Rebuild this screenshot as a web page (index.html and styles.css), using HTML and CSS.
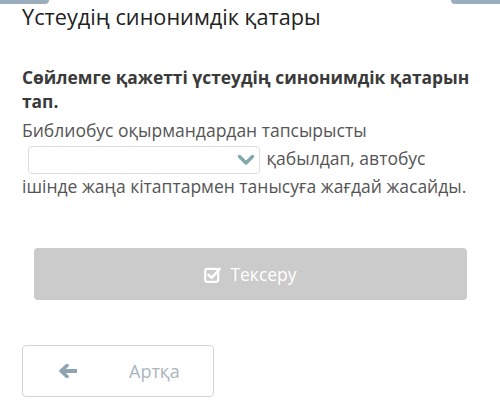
FILE: index.html
```html
<!DOCTYPE html>
<html lang="kk">

<head>
    <meta charset="UTF-8">
    <meta name="viewport" content="width=device-width, initial-scale=1.0">
    <title>Үстеудің синонимдік қатары</title>
    <link rel="stylesheet" href="styles.css">
</head>

<body>
    <div class="tabs">
        <span class="tab tab-left"></span>
        <span class="tab tab-right"></span>
    </div>

    <div class="task">
        <h1 class="title">Үстеудің синонимдік қатары</h1>

        <p class="question">Сөйлемге қажетті үстеудің синонимдік қатарын тап.</p>

        <div class="sentence">
            Библиобус оқырмандардан тапсырысты<br>
            <span class="select">
                <svg class="chevron" width="18" height="12" viewBox="0 0 18 12">
                    <path d="M2.5 2.5 L9 9 L15.5 2.5" fill="none" stroke="#80a9ab" stroke-width="3.4" stroke-linecap="round" stroke-linejoin="round"/>
                </svg>
            </span>
            қабылдап, автобус<br>
            ішінде жаңа кітаптармен танысуға жағдай жасайды.
        </div>

        <button class="check">
            <svg class="check-icon" width="17" height="17" viewBox="0 0 17 17">
                <rect x="1.2" y="2.8" width="13" height="13" rx="2" fill="none" stroke="#fff" stroke-width="2.2"/>
                <path d="M4.5 8.8 L7.6 11.8 L15.6 3" fill="none" stroke="#fff" stroke-width="2.6" stroke-linecap="round" stroke-linejoin="round"/>
            </svg>
            Тексеру
        </button>

        <button class="back">
            <svg class="arrow" width="18" height="14" viewBox="0 0 18 14">
                <path d="M17 7 H5" stroke="#8fa3b3" stroke-width="4" stroke-linecap="round"/>
                <path d="M8 1.5 L2 7 L8 12.5" fill="none" stroke="#8fa3b3" stroke-width="3.6" stroke-linecap="round" stroke-linejoin="round"/>
            </svg>
            <span class="back-label">Артқа</span>
        </button>
    </div>
</body>

</html>
```

FILE: styles.css
```css
* {
    margin: 0;
    padding: 0;
    box-sizing: border-box;
}

body {
    font-family: 'Open Sans', sans-serif;
    background: #fff;
    color: #333;
    width: 500px;
    height: 402px;
    overflow: hidden;
}

.tabs {
    display: flex;
    justify-content: space-between;
    height: 4px;
}

.tab {
    display: block;
    width: 49px;
    height: 4px;
    background-color: #9badbc;
}

.tab-left {
    border-bottom-right-radius: 4px;
}

.tab-right {
    border-bottom-left-radius: 4px;
}

.task {
    padding: 0 0 0 22px;
}

.title {
    font-size: 21.7px;
    font-weight: 400;
    color: #222;
    line-height: 30px;
    margin-top: -2px;
}

.question {
    font-size: 17.4px;
    font-weight: 700;
    color: #3a3a3a;
    line-height: 24px;
    width: 470px;
    margin-top: 33px;
}

.sentence {
    font-size: 17.5px;
    color: #555;
    line-height: 28px;
    margin-top: 3px;
}

/* empty dropdown; negative block margins keep the line box at 28px */
.select {
    display: inline-flex;
    justify-content: flex-end;
    align-items: center;
    width: 232px;
    height: 28px;
    margin: -2px 2px -2px 6px;
    padding-right: 4px;
    border: 1px solid #ddd;
    border-radius: 4px;
    vertical-align: middle;
}

.check {
    display: flex;
    justify-content: center;
    align-items: center;
    gap: 9px;
    width: 433px;
    height: 52px;
    margin: 48px 0 0 12px;
    background-color: #cbcbcb;
    border: none;
    border-radius: 4px;
    color: #fff;
    font-family: inherit;
    font-size: 17.5px;
}

.back {
    display: flex;
    align-items: center;
    width: 192px;
    height: 52px;
    margin-top: 45px;
    padding-left: 36px;
    background-color: #fff;
    border: 1px solid #d4d4d4;
    border-radius: 4px;
    color: #a9b5be;
    font-family: inherit;
    font-size: 18px;
}

.back-label {
    margin-left: 52px;
}
```
